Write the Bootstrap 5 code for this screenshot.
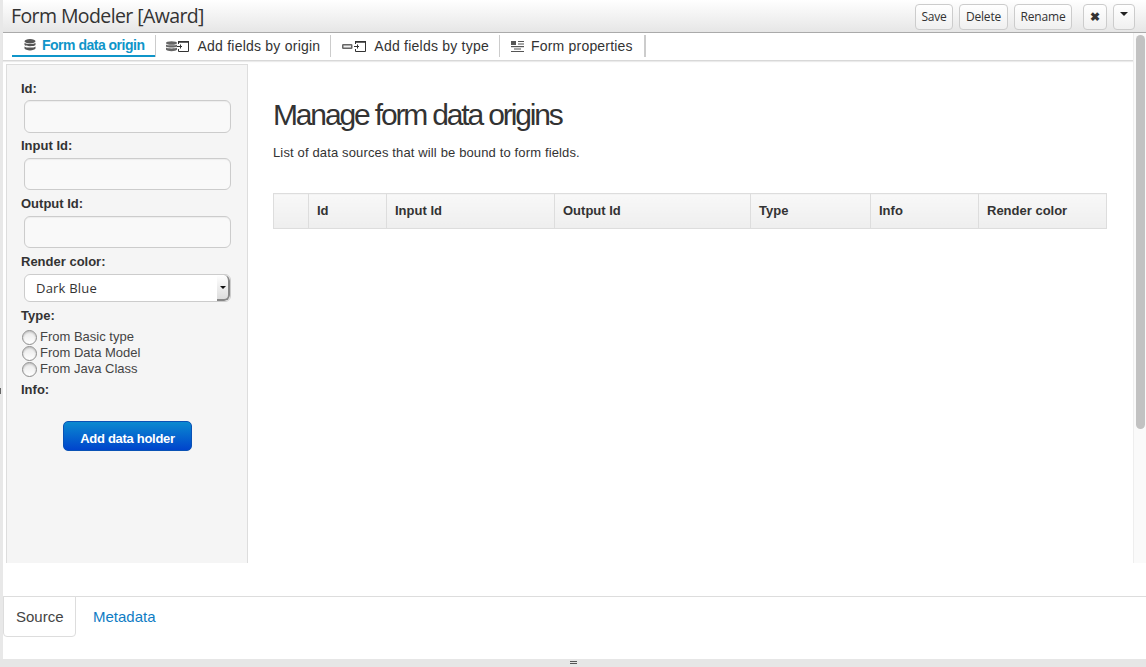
<!DOCTYPE html>
<html lang="en">
<head>
<meta charset="utf-8">
<title>Form Modeler</title>
<link href="https://cdn.jsdelivr.net/npm/bootstrap@5.3.0/dist/css/bootstrap.min.css" rel="stylesheet">
<style>
html,body{height:100%;overflow:hidden}
body{font-family:"Liberation Sans",Arial,sans-serif;font-size:13px;color:#333;background:#e8e8e8;line-height:18px}
.shell{height:667px;display:flex;flex-direction:column;position:relative}
.titlebar{height:33px;flex:none;margin-left:3px;background:linear-gradient(#fff,#e6e6e6);border-bottom:1px solid #aaa;padding:0 11px 0 8px;display:flex;align-items:center;justify-content:space-between}
.titletext{font-family:"Open Sans",sans-serif;font-size:19.5px;color:#333;line-height:30px;margin-top:-1px;letter-spacing:-.6px}
.tbtn{font-family:"Open Sans",sans-serif;font-size:12px;line-height:16px;height:26px;padding:4px 6px;color:#333;background:linear-gradient(#fff,#f0f0f0);border:1px solid #ccc;border-radius:4px;letter-spacing:-.2px;display:flex;align-items:center;justify-content:center}
.tbtn:hover{color:#333;border-color:#ccc}
.btn-x{width:24px;margin-left:5px;padding:0;font-weight:700}
.btn-caret{width:22px;padding:0 0 6px}
.btn-caret::after{content:"";border-top:4px solid #222;border-left:4px solid transparent;border-right:4px solid transparent}
.toolgap{gap:6px;margin-top:1px}
.body-wrap{margin-left:3px;flex:1;background:#fff;display:flex;flex-direction:column;min-height:0}
.upper{height:530px;flex:none;display:flex;min-height:0}
.upper-main{flex:1;min-width:0;display:flex;flex-direction:column}
.tabstrip{height:28px;flex:none;background:#fff;border-bottom:1px solid #d8d8d8;box-shadow:0 1px 1px rgba(0,0,0,.08);padding:2px 0 0 9px;display:flex;align-items:flex-start}
.mtab{height:22px;display:flex;align-items:center;padding:0 10px 0 11px;gap:8px;font-size:14px;color:#333;border-right:1px solid #ccc;text-decoration:none;letter-spacing:.23px}
.mtab.on{color:#0f95c9;font-weight:700;border-bottom:2px solid #0f95c9;border-right:0;height:22px;padding:0 11px 0 12px;letter-spacing:-.5px;gap:6px}
.mtab.on+.mtab{border-left:1px solid #ccc;padding-left:10px}
.mtab svg{flex:none}
.mtab:last-child{border-right-width:2px;gap:7px;padding-right:11px;letter-spacing:.2px}
.panes{flex:1;display:flex;min-height:0;padding:3px 0 0 3px}
.sidepane{width:242px;flex:none;background:#f5f5f5;border:1px solid #ddd;border-bottom:0;padding:16px 15px 0 14px}
.flabel{display:block;font-weight:700;font-size:13px;line-height:16px;margin:0 0 4px;color:#333}
.flabel.lead-label{margin-bottom:3px}
.finput{display:block;width:207px;height:32px;margin:0 0 6px 3px;background:#f9f9f9;border:1px solid #ccc;border-radius:6px;box-shadow:inset 0 1px 1px rgba(0,0,0,.05)}
.finput.first-input{height:33px;margin-bottom:5px}
.finput.form-control:focus{background:#f9f9f9}
.fselect{width:207px;height:28px;margin:0 0 6px 3px;background:#fff;border:1px solid #ccc;border-radius:6px;display:flex;align-items:center;justify-content:space-between;padding-left:11px;font-family:"Open Sans",sans-serif;font-size:13px;letter-spacing:.2px;color:#333;overflow:hidden}
.fcaret{width:13px;height:26px;background:linear-gradient(#fff,#ddd);border-right:2px solid #888;border-bottom:2px solid #888;border-radius:0 6px 6px 0;display:flex;align-items:center;justify-content:center}
.fcaret::after{content:"";border-top:3px solid #111;border-left:3px solid transparent;border-right:3px solid transparent}
.radio-row{display:flex;align-items:center;gap:3px;height:16px;margin-left:1px;font-size:13px;color:#444}
.radio-dot{width:15px;height:15px;border-radius:50%;border:1px solid #8d8d8d;background:linear-gradient(#e8e8e8,#fff);box-shadow:inset 0 1px 2px rgba(0,0,0,.2)}
.addbtn{width:129px;height:30px;margin:23px 0 0 42px;padding:5px 0 0;font-size:13px;font-weight:700;color:#fff;border:1px solid #0a52b5;border-radius:5px;background:linear-gradient(#0b8ad0,#0044cc);letter-spacing:-.3px}
.addbtn:hover{color:#fff}
.mainpane{flex:1;min-width:0;padding:35px 26px 0 25px}
.pagetitle{font-family:"Liberation Sans",sans-serif;font-size:30px;font-weight:400;line-height:32px;letter-spacing:-2.15px;color:#333;margin:0 0 13px}
.pagesub{font-size:13px;line-height:18px;color:#333;margin:0 0 31px;letter-spacing:.14px}
.origins{width:100%;table-layout:fixed;border-collapse:collapse;margin:0}
.origins th{height:35px;padding:0 8px;background:linear-gradient(#f8f8f8,#eee);border:1px solid #ddd;font-size:13px;font-weight:700;color:#333;vertical-align:middle}
.scrollzone{width:13px;flex:none;background:#fafafa;border-left:1px solid #eee;padding:2px 1px 0 2px;display:flex;flex-direction:column}
.scrollthumb{height:394px;background:#c2c2c2;border-radius:5px}
.lower{flex:1;background:#fff;display:flex;flex-direction:column;min-height:0}
.lowertabs{margin-top:33px;height:40px;border-top:1px solid #ddd;display:flex}
.ltab{height:41px;margin-top:-1px;display:flex;align-items:center;color:#0f7cc4;padding:0 17px;text-decoration:none;font-family:"Liberation Sans",sans-serif;font-size:15px}
.ltab.on{width:73px;padding:0 0 0 12px;color:#444;background:#fff;border:1px solid #ddd;border-radius:0 0 4px 4px}
.splitter{height:8px;flex:none;background:#e6e6e6;margin-left:-3px;display:flex;align-items:center;justify-content:center;flex-direction:column}
.splitter span{width:7px;height:1px;background:#555;margin-bottom:1px}
.sidehandle{position:absolute;left:0;top:388px;width:1px;height:6px;background:#666}
</style>
</head>
<body>
<div class="shell">
  <div class="titlebar">
    <div class="titletext">Form Modeler [Award]</div>
    <div class="d-flex toolgap align-items-center">
      <a class="btn tbtn" href="#" style="width:38px">Save</a>
      <a class="btn tbtn" href="#" style="width:49px">Delete</a>
      <a class="btn tbtn" href="#" style="width:58px">Rename</a>
      <a class="btn tbtn btn-x" href="#">✖</a>
      <a class="btn tbtn btn-caret" href="#"></a>
    </div>
  </div>
  <div class="body-wrap">
    <div class="upper">
      <div class="upper-main">
        <div class="tabstrip">
          <a class="mtab on" href="#">
            <svg width="12" height="12" viewBox="0 0 12 12"><g fill="#555"><ellipse cx="6" cy="2.2" rx="5.5" ry="2.2"/><path d="M.5 3.8c1 1.6 10 1.6 11 0V6c-1 1.6-10 1.6-11 0z"/><path d="M.5 7.4c1 1.6 10 1.6 11 0v2.2c-1 2.4-10 2.4-11 0z"/></g></svg>
            Form data origin</a>
          <a class="mtab" href="#">
            <svg width="23" height="11" viewBox="0 0 23 11"><g fill="#666"><ellipse cx="5.5" cy="2" rx="5.5" ry="1.8"/><path d="M0 3.4c1 1.2 10 1.2 11 0V5.4c-1 1.4-10 1.4-11 0z"/><path d="M0 6.6c1 1.2 10 1.2 11 0v2.2c-1 1.8-10 1.8-11 0z"/></g><path d="M12.5 3V1h10v9.5h-10V8" fill="none" stroke="#333"/><path d="M12 0h11v1.5H12zM11 5h5v1h-5zM14 3.5h1v4h-1z" fill="#333"/></svg>
            Add fields by origin</a>
          <a class="mtab" href="#">
            <svg width="24" height="11" viewBox="0 0 24 11"><rect x=".75" y="3.75" width="9" height="3.5" rx=".5" fill="#eee" stroke="#666" stroke-width="1.5"/><path d="M13.5 3V1h10v9.5h-10V8" fill="none" stroke="#333"/><path d="M13 0h11v1.5H13zM12 5h5v1h-5zM15 3.5h1v4h-1z" fill="#333"/></svg>
            Add fields by type</a>
          <a class="mtab" href="#">
            <svg width="13" height="11" viewBox="0 0 13 11"><g fill="#555"><rect x="0" y="0" width="5" height="4"/><rect x="7" y="0" width="6" height="1"/><rect x="7" y="2.5" width="6" height="1"/><rect x="0" y="5" width="13" height="1.2"/><rect x="3" y="7.5" width="7" height="1"/><rect x="0" y="10" width="13" height="1"/></g></svg>
            Form properties</a>
        </div>
        <div class="panes">
          <div class="sidepane">
            <label class="flabel lead-label">Id:</label>
            <input class="form-control finput first-input" type="text">
            <label class="flabel">Input Id:</label>
            <input class="form-control finput" type="text">
            <label class="flabel">Output Id:</label>
            <input class="form-control finput" type="text">
            <label class="flabel">Render color:</label>
            <div class="fselect"><span>Dark Blue</span><span class="fcaret"></span></div>
            <label class="flabel" style="margin-bottom:5px">Type:</label>
            <div class="radio-row"><span class="radio-dot"></span>From Basic type</div>
            <div class="radio-row"><span class="radio-dot"></span>From Data Model</div>
            <div class="radio-row"><span class="radio-dot"></span>From Java Class</div>
            <label class="flabel" style="margin-top:5px;margin-bottom:0">Info:</label>
            <a class="btn addbtn d-flex align-items-center justify-content-center" href="#">Add data holder</a>
          </div>
          <div class="mainpane">
            <h1 class="pagetitle">Manage form data origins</h1>
            <p class="pagesub">List of data sources that will be bound to form fields.</p>
            <table class="origins">
              <colgroup><col style="width:35px"><col style="width:78px"><col style="width:168px"><col style="width:196px"><col style="width:120px"><col style="width:108px"><col></colgroup>
              <thead><tr><th></th><th>Id</th><th>Input Id</th><th>Output Id</th><th>Type</th><th>Info</th><th>Render color</th></tr></thead>
            </table>
          </div>
        </div>
      </div>
      <div class="scrollzone"><div class="scrollthumb"></div></div>
    </div>
    <div class="lower">
      <div class="lowertabs">
        <a class="ltab on" href="#">Source</a>
        <a class="ltab" href="#">Metadata</a>
      </div>
    </div>
    <div class="splitter"><span></span><span></span></div>
  </div>
  <div class="sidehandle"></div>
</div>
</body>
</html>
